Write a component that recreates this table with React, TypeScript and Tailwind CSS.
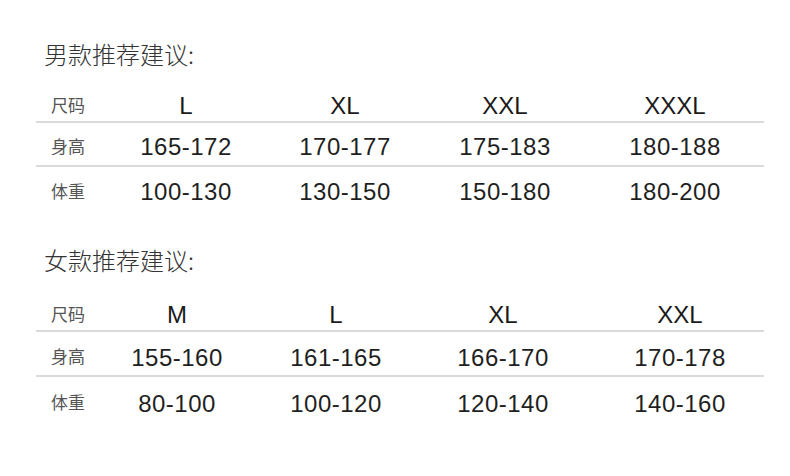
import React from "react";

interface SizeTableProps {
  title: string;
  cols: string;
  sizes: string[];
  heights: string[];
  weights: string[];
  headerGap: string;
  rowClass: string;
  lastPad?: string;
}

const latin = { fontFamily: '"Liberation Sans", Arial, sans-serif' };

const SizeTable: React.FC<SizeTableProps> = ({ title, cols, sizes, heights, weights, headerGap, rowClass, lastPad = "" }) => {
  const rows = [
    { label: "身高", values: heights },
    { label: "体重", values: weights },
  ];

  return (
    <div className="w-[728px]">
      <h2 className="pl-[8px] h-[32px] leading-[32px] text-[24px] font-light text-[#333]">{title}</h2>

      {/* Size header row */}
      <div className={`grid ${cols} h-[32px] ${headerGap} items-center border-b-2 border-[#dadada]`}>
        <div className="pl-[15px] mb-[4px] text-[17px] leading-none text-[#555]">尺码</div>
        {sizes.map((s, i) => (
          <div
            key={s}
            className={`text-center text-[24px] leading-none text-[#1a1a1a] ${i === sizes.length - 1 ? lastPad : ""}`}
            style={latin}
          >
            {s}
          </div>
        ))}
      </div>

      {rows.map((row, ri) => (
        <div
          key={row.label}
          className={`grid ${cols} ${rowClass} items-center ${ri === 0 ? "border-b-2 border-[#dadada]" : ""}`}
        >
          <div className="pl-[15px] mb-[4px] text-[17px] leading-none text-[#555]">{row.label}</div>
          {row.values.map((v, i) => (
            <div
              key={v + i}
              className={`text-center text-[24px] leading-none tracking-[0.5px] text-[#1f1f1f] ${i === row.values.length - 1 ? lastPad : ""}`}
              style={latin}
            >
              {v}
            </div>
          ))}
        </div>
      ))}
    </div>
  );
};

const App: React.FC = () => {
  return (
    <div
      className="w-[790px] h-[476px] bg-white overflow-hidden pt-[38px] pl-[36px]"
      style={{ fontFamily: '"Noto Sans CJK SC", "Liberation Sans", sans-serif' }}
    >
      <SizeTable
        title="男款推荐建议:"
        cols="grid-cols-[70px_160px_158px_162px_178px]"
        sizes={["L", "XL", "XXL", "XXXL"]}
        heights={["165-172", "170-177", "175-183", "180-188"]}
        weights={["100-130", "130-150", "150-180", "180-200"]}
        headerGap="mt-[21px]"
        rowClass="h-[44px] pt-[6px]"
      />
      <div className="h-[33px]" />
      <SizeTable
        title="女款推荐建议:"
        cols="grid-cols-[70px_142px_176px_158px_182px]"
        sizes={["M", "L", "XL", "XXL"]}
        heights={["155-160", "161-165", "166-170", "170-178"]}
        weights={["80-100", "100-120", "120-140", "140-160"]}
        headerGap="mt-[24px]"
        rowClass="h-[45px] pt-[8px]"
        lastPad="pl-[14px]"
      />
    </div>
  );
};

export default App;
